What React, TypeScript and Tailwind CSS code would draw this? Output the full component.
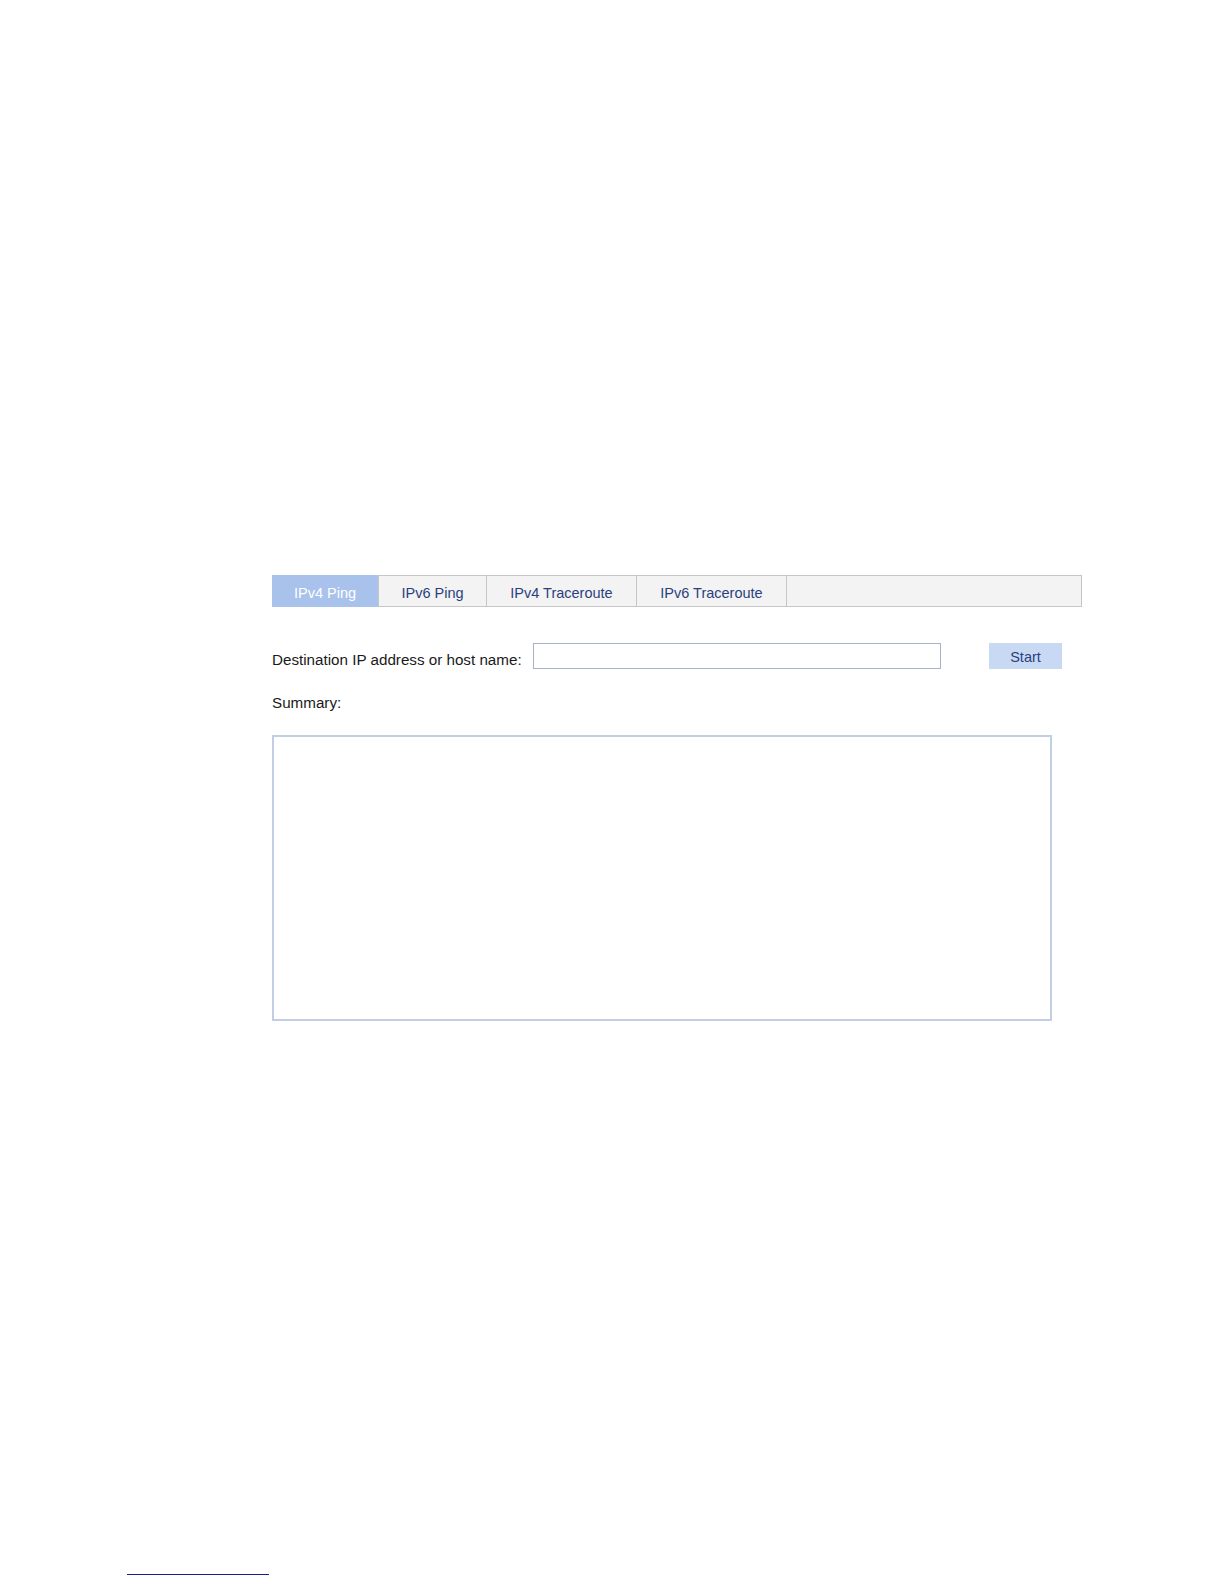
import React, { useState } from 'react';

const tabs = [
  { label: 'IPv4 Ping', w: 'w-[107px]' },
  { label: 'IPv6 Ping', w: 'w-[108px]' },
  { label: 'IPv4 Traceroute', w: 'w-[150px]' },
  { label: 'IPv6 Traceroute', w: 'w-[150px]' },
];

export default function App() {
  const [active, setActive] = useState(0);
  const [host, setHost] = useState('');
  const [summary, setSummary] = useState('');

  return (
    <div className="min-h-[1584px] bg-white font-['Liberation_Sans',Arial,sans-serif] text-[#1a1a1a]">
      <div className="pl-[272px] pt-[575px]">
        {/* Tab strip */}
        <div className="flex h-[32px] w-[810px] border border-[#c6c6c6] bg-[#f3f3f3]">
          {tabs.map((t, i) => (
            <button
              key={t.label}
              onClick={() => setActive(i)}
              className={`${t.w} -my-px flex h-[32px] items-center justify-center border-r border-[#c6c6c6] pt-[5px] text-[14.5px] ${
                i === active ? '-ml-px bg-[#a8c2ec] text-white' : 'text-[#2b3f80]'
              }`}
            >
              {t.label}
            </button>
          ))}
        </div>

        {/* Destination row */}
        <div className="mt-[36px] flex items-start">
          <label className="mt-[8px] w-[261px] text-[15.2px] leading-[17px]">
            Destination IP address or host name:
          </label>
          <input
            type="text"
            value={host}
            onChange={(e) => setHost(e.target.value)}
            className="h-[26px] w-[408px] border border-[#a3b3cb] bg-white px-1 text-[14px] outline-none"
          />
          <button
            onClick={() => setSummary(host ? `Ping ${host} ...` : '')}
            className="ml-[48px] h-[26px] w-[73px] bg-[#c7d9f3] pt-[4px] text-[14.5px] text-[#2b3f80]"
          >
            Start
          </button>
        </div>

        <div className="mt-[25px] text-[15.2px] leading-[17px]">Summary:</div>

        <textarea
          readOnly
          value={summary}
          className="mt-[24px] block h-[286px] w-[780px] resize-none border-2 border-[#c2cde6] bg-white p-1 text-[14px] outline-none"
        />
      </div>

      {/* footnote rule */}
      <div className="ml-[127px] mt-[553px] h-px w-[142px] bg-[#1c1c8c]" />
    </div>
  );
}
